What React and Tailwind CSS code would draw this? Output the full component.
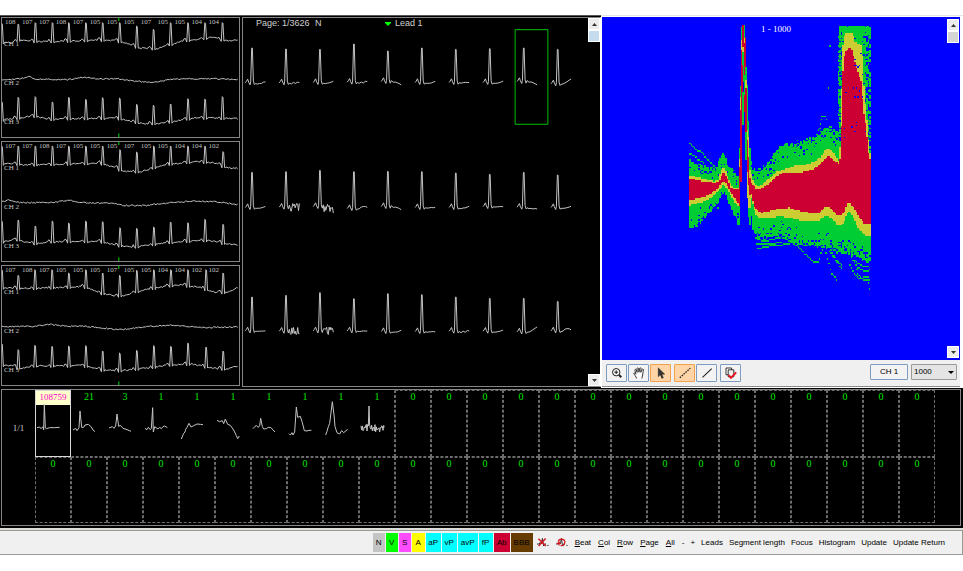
import React from "react";

/* Small seeded generator, so that every render gives the same traces. */
function makeRandom(seed) {
  let s = seed;
  return () => {
    s = (s * 1664525 + 1013904223) % 4294967296;
    return s / 4294967296;
  };
}

/* Linear interpolation in a list of [x, y] points. */
function at(points, x) {
  if (x <= points[0][0]) return points[0][1];
  for (let i = 1; i < points.length; i++) {
    if (x <= points[i][0]) {
      const [x0, y0] = points[i - 1];
      const [x1, y1] = points[i];
      return y0 + ((y1 - y0) * (x - x0)) / (x1 - x0);
    }
  }
  return points[points.length - 1][1];
}

/* ---------- Holter strips ---------- */

const STRIPS = [
  {
    top: 54,
    rates: [108, 107, 107, 108, 107, 105, 105, 105, 107, 105, 105, 104, 104],
    peaks: [6, 55, 106, 157, 206, 257, 307, 358, 409, 459, 510, 562, 613, 665],
    ch1: [[6, 128], [40, 128], [55, 120], [120, 125], [240, 122], [300, 120], [350, 122], [400, 137], [420, 144], [470, 146], [510, 133], [550, 122], [590, 118], [630, 112], [680, 122], [712, 120]],
    t1: [70, 72, 68, 68, 68, 68, 68, 68, 78, 88, 68, 68, 68, 68],
    ch2: [[6, 241], [50, 237], [90, 230], [105, 238], [200, 239], [250, 232], [300, 237], [360, 237], [400, 243], [460, 248], [510, 238], [600, 236], [712, 238]],
    ch3: [[6, 360], [50, 355], [100, 347], [150, 358], [200, 356], [300, 355], [350, 354], [400, 365], [430, 371], [480, 370], [520, 364], [580, 353], [712, 356]],
    t3: [305, 292, 290, 306, 292, 298, 293, 294, 313, 316, 312, 296, 297, 290],
  },
  {
    top: 13,
    rates: [107, 107, 108, 107, 105, 105, 105, 107, 105, 105, 104, 104, 102],
    peaks: [6, 55, 106, 157, 206, 257, 307, 359, 409, 460, 510, 562, 613, 667],
    ch1: [[6, 79], [50, 78], [70, 82], [200, 79], [300, 76], [350, 92], [370, 101], [420, 102], [460, 90], [510, 79], [590, 71], [640, 76], [680, 90], [712, 92]],
    t1: [25, 25, 25, 25, 25, 25, 25, 36, 43, 25, 25, 25, 25, 42],
    ch2: [[6, 192], [30, 187], [60, 195], [160, 194], [200, 188], [250, 195], [350, 198], [370, 203], [430, 204], [520, 194], [600, 190], [650, 193], [712, 201]],
    ch3: [[6, 313], [50, 304], [70, 312], [110, 318], [150, 312], [300, 311], [350, 323], [400, 328], [440, 323], [500, 315], [560, 311], [620, 308], [690, 320], [712, 322]],
    t3: [250, 247, 265, 250, 256, 250, 252, 270, 272, 268, 253, 255, 245, 260],
  },
  {
    top: 17,
    rates: [107, 108, 107, 105, 105, 105, 107, 105, 105, 104, 104, 102, 102],
    peaks: [6, 55, 105, 156, 206, 257, 307, 358, 409, 460, 511, 562, 616, 667],
    ch1: [[6, 83], [100, 84], [200, 81], [250, 78], [300, 98], [340, 106], [370, 106], [400, 95], [440, 87], [500, 77], [540, 74], [600, 81], [640, 95], [680, 97], [712, 80]],
    t1: [28, 45, 28, 28, 38, 28, 38, 45, 30, 28, 28, 28, 28, 38],
    ch2: [[6, 199], [100, 198], [150, 192], [200, 198], [250, 198], [360, 208], [450, 198], [520, 194], [600, 202], [712, 200]],
    ch3: [[6, 315], [40, 316], [60, 325], [100, 316], [200, 317], [250, 315], [300, 329], [360, 331], [450, 322], [500, 314], [570, 311], [650, 325], [680, 326], [712, 316]],
    t3: [250, 268, 255, 258, 257, 256, 272, 278, 270, 256, 258, 248, 260, 272],
  },
];

function rhythm(base, peaks, tops, seed) {
  const rnd = makeRandom(seed);
  const pts = [];
  for (let x = 6; x <= 712; x += 4) {
    const y = at(base, x);
    const near = peaks.findIndex((p) => Math.abs(p - x) <= 5);
    if (tops && near >= 0) continue;
    const pWave = tops && peaks.some((p) => p - x > 7 && p - x < 14) ? -5 : 0;
    pts.push([x, y + pWave + (rnd() - 0.5) * 4]);
  }
  if (tops) {
    peaks.forEach((p, i) => {
      const y = at(base, p);
      pts.push([p - 4, y + 5], [p - 1, tops[i]], [p + 1, tops[i] + 2], [p + 4, y + 4]);
    });
  }
  pts.sort((a, b) => a[0] - b[0]);
  return pts.map(([x, y]) => `${x},${y.toFixed(1)}`).join(" ");
}

function Trace({ points, width = 1 }) {
  return (
    <polyline
      points={points}
      fill="none"
      stroke="#c4c4c4"
      strokeWidth={width}
      vectorEffect="non-scaling-stroke"
    />
  );
}

function Strip({ strip, index }) {
  return (
    <section className="relative h-[121px] border border-[#858585]">
      <svg
        className="block h-full w-full"
        viewBox={`6 ${strip.top} 708 357`}
        preserveAspectRatio="none"
        aria-hidden="true"
      >
        <Trace points={rhythm(strip.ch1, strip.peaks, strip.t1, 11 + index)} />
        <Trace points={rhythm(strip.ch2, strip.peaks, null, 21 + index)} />
        <Trace points={rhythm(strip.ch3, strip.peaks, strip.t3, 31 + index)} />
        <path
          d={`M355 ${strip.top}v9M355 ${strip.top + 346}v11`}
          stroke="#00e000"
          strokeWidth="1"
          vectorEffect="non-scaling-stroke"
        />
      </svg>
      <div className="absolute top-0 right-5 left-[3px] flex justify-between text-[7px] leading-[9px] text-[#c0c0c0]">
        {strip.rates.map((r, i) => (
          <span key={i}>{r}</span>
        ))}
      </div>
      <div className="absolute top-[22px] left-[2px] flex flex-col gap-[30px] text-[7px] leading-[9px] text-[#c8c8c8]">
        <span>CH 1</span>
        <span>CH 2</span>
        <span>CH 3</span>
      </div>
    </section>
  );
}

/* ---------- Beat gallery ---------- */

/* [top, base, kind of tail] for the ten beats of every row */
const BEATS = [
  [[57, 160, "rise"], [60, 160, "rough"], [61, 159, "rise"], [45, 158, "rough"], [66, 156, "fall"], [57, 159, "rise"], [61, 159, "flat"], [59, 159, "rise"], [57, 156, "fall"], [61, 163, "climb"]],
  [[429, 533, "rise"], [427, 532, "noise"], [423, 530, "noiseLow"], [427, 536, "arch"], [426, 530, "fall"], [427, 533, "flat"], [431, 533, "rise"], [435, 530, "flat"], [429, 532, "flatLow"], [437, 533, "rise"]],
  [[802, 902, "flat"], [797, 903, "noise"], [789, 902, "noise"], [807, 902, "flat"], [792, 904, "rise"], [795, 904, "flat"], [802, 903, "rough"], [806, 903, "rise"], [806, 905, "climb"], [815, 902, "arch"]],
];

const TAILS = {
  rise: [4, 4, 3, 2, -1, -3],
  flat: [2, 3, 2, 1, 2, 1],
  flatLow: [3, 5, 4, 6, 5, 7],
  rough: [2, 5, 0, 4, -2, 1],
  fall: [-2, 3, 3, 5, 8, 12],
  climb: [3, 1, -2, -6, -10, -15],
  arch: [4, 2, -4, -6, -5, -2],
  noise: [2, 2, 2, 2, 2, 2],
  noiseLow: [2, 5, 6, 9, 9, 10],
};

function beat(x, [top, base, kind], seed) {
  const rnd = makeRandom(seed);
  const noisy = kind.startsWith("noise");
  const pts = [
    [x - 20, base + 1],
    [x - 17, base - 3],
    [x - 13, base - 10],
    [x - 10, base - 1],
    [x - 6, base + 7],
    [x - 4, base - 2],
    [x - 1, top],
    [x + 1, top],
    [x + 4, base - 4],
    [x + 7, base + 6],
  ];
  const tail = TAILS[kind];
  const step = noisy ? 2.5 : 6;
  for (let d = 10; d <= 42; d += step) {
    const y = at(tail.map((v, i) => [9 + i * 6.6, v]), d);
    pts.push([x + d, base + y + (rnd() - 0.5) * (noisy ? 26 : 1.5)]);
  }
  return pts.map(([px, py]) => `${px},${py.toFixed(1)}`).join(" ");
}

function Gallery() {
  return (
    <svg
      className="block min-h-0 w-full flex-1"
      viewBox="3 0 1032 1068"
      preserveAspectRatio="none"
      aria-hidden="true"
    >
      {BEATS.map((row, r) =>
        row.map((b, i) => (
          <Trace key={`${r}-${i}`} points={beat(30 + i * 101.6, b, 7 + r * 13 + i * 5)} />
        ))
      )}
      <rect
        x="817"
        y="2"
        width="98"
        height="283"
        fill="none"
        stroke="#00c000"
        strokeWidth="1"
        vectorEffect="non-scaling-stroke"
      />
    </svg>
  );
}

/* ---------- Density plot ---------- */

const GREEN = "#00cc33";
const YELLOW = "#cccc33";
const RED = "#cc0033";
const BLUE = "#0000ff";

const LEFT = {
  gT: [[27, 436], [50, 448], [75, 455], [105, 460], [115, 432], [128, 405], [135, 430], [145, 458], [160, 470], [176, 480]],
  yT: [[27, 480], [60, 488], [100, 498], [112, 495], [120, 465], [128, 456], [137, 470], [145, 500], [155, 515], [176, 520]],
  rT: [[27, 489], [60, 497], [100, 503], [115, 500], [122, 478], [128, 468], [138, 485], [148, 515], [160, 522], [176, 525]],
  rB: [[27, 555], [60, 548], [90, 535], [110, 520], [122, 502], [128, 497], [135, 503], [145, 525], [160, 548], [176, 570]],
  yB: [[27, 570], [60, 562], [90, 548], [115, 525], [128, 508], [138, 520], [150, 545], [165, 565], [176, 577]],
  gB: [[27, 640], [50, 632], [70, 612], [100, 575], [120, 548], [132, 532], [145, 565], [160, 600], [172, 628], [176, 630]],
};

const RIGHT = {
  gT: [[210, 430], [216, 462], [240, 462], [265, 440], [285, 410], [300, 388], [330, 386], [360, 380], [390, 370], [410, 360], [425, 345], [445, 335], [460, 342], [470, 352], [476, 345], [477, 30], [570, 30]],
  yT: [[210, 470], [214, 490], [222, 508], [235, 514], [250, 500], [270, 485], [290, 468], [310, 462], [340, 452], [370, 450], [400, 440], [420, 425], [435, 402], [445, 398], [455, 408], [465, 425], [474, 438], [478, 380], [482, 200], [486, 90], [492, 52], [515, 52], [522, 80], [543, 92], [550, 230], [556, 290], [562, 370], [570, 440]],
  rT: [[210, 500], [225, 520], [240, 520], [260, 508], [285, 484], [300, 475], [330, 472], [370, 470], [400, 460], [425, 440], [440, 425], [448, 425], [460, 437], [475, 445], [480, 410], [484, 210], [488, 125], [498, 102], [512, 98], [518, 125], [530, 170], [540, 200], [548, 290], [556, 340], [562, 410], [570, 445]],
  rB: [[210, 530], [220, 575], [240, 593], [265, 588], [300, 580], [325, 578], [350, 585], [380, 592], [415, 592], [430, 577], [440, 573], [455, 585], [470, 600], [480, 600], [490, 590], [500, 560], [508, 562], [520, 580], [535, 605], [550, 625], [570, 628]],
  yB: [[210, 545], [225, 600], [240, 610], [300, 604], [330, 608], [370, 618], [410, 618], [435, 602], [450, 608], [470, 630], [485, 630], [495, 605], [503, 588], [515, 600], [530, 640], [550, 660], [570, 660]],
  gB: [[210, 590], [215, 640], [230, 668], [260, 672], [300, 658], [330, 675], [370, 690], [410, 695], [440, 700], [470, 712], [500, 718], [520, 720], [550, 740], [570, 745]],
};

/* The two flanks of the R wave: [x, y, width, height, colour] */
const SPIKE = [
  [176, 400, 5, 230, GREEN], [176, 432, 5, 25, YELLOW], [176, 457, 5, 115, RED],
  [180, 212, 5, 45, GREEN], [180, 245, 5, 45, YELLOW], [180, 285, 5, 215, RED],
  [183, 35, 5, 40, GREEN], [183, 75, 5, 35, YELLOW], [183, 105, 5, 185, RED],
  [187, 30, 5, 70, RED], [187, 95, 5, 20, YELLOW], [187, 110, 5, 90, GREEN], [187, 150, 3, 60, RED], [187, 230, 4, 100, GREEN],
  [191, 30, 5, 42, GREEN], [191, 70, 5, 25, YELLOW], [191, 85, 5, 205, RED], [191, 180, 3, 60, GREEN],
  [195, 65, 3, 150, RED], [196, 155, 5, 50, GREEN], [196, 195, 5, 25, YELLOW], [196, 220, 5, 130, RED], [196, 350, 4, 85, GREEN],
  [200, 210, 5, 85, GREEN], [200, 290, 5, 100, GREEN], [200, 345, 5, 45, YELLOW], [200, 375, 5, 95, RED], [200, 470, 4, 80, YELLOW],
  [204, 318, 4, 120, GREEN], [204, 365, 4, 65, YELLOW], [204, 425, 5, 85, RED], [204, 510, 4, 70, YELLOW], [204, 580, 4, 25, GREEN],
  [208, 400, 4, 90, GREEN], [208, 465, 4, 30, YELLOW], [208, 490, 5, 50, RED], [208, 540, 4, 40, YELLOW], [208, 580, 4, 50, GREEN],
];

/* Single stray beats, drawn as rows of dots */
const STRAYS = [
  [[27, 383], [45, 402], [60, 405], [75, 425], [90, 440], [105, 455]],
  [[27, 415], [40, 418], [50, 432], [70, 440]],
  [[225, 668], [250, 676], [300, 663], [335, 678], [380, 690]],
  [[232, 697], [270, 690], [300, 688], [335, 680], [350, 690], [370, 712], [400, 740], [414, 740], [422, 708], [432, 692]],
  [[228, 682], [265, 684], [300, 680]],
  [[436, 712], [444, 740], [452, 772], [470, 793]],
  [[446, 705], [462, 730], [482, 755]],
  [[455, 712], [470, 735], [484, 748]],
  [[508, 745], [520, 770], [535, 788], [570, 780]],
  [[512, 725], [530, 755], [550, 765], [570, 762]],
  [[522, 735], [545, 750], [570, 752]],
  [[530, 775], [550, 792], [570, 790]],
  [[404, 365], [412, 345], [420, 335]],
  [[424, 300], [434, 302], [440, 315]],
];

const STRAY_DOTS = [[449, 91], [445, 218], [568, 821], [565, 800], [114, 575], [530, 760], [352, 372], [424, 312], [421, 325]];

const CELL = 4.5;

function densityPaths() {
  const rnd = makeRandom(99);
  const d = { green: "", yellow: "", red: "", holes: "" };
  const snap = (y) => Math.round(y / CELL) * CELL;
  const run = (x, y0, y1) => {
    const a = snap(y0);
    const b = snap(y1);
    return b > a ? `M${x} ${a}h${CELL}v${b - a}h-${CELL}z` : "";
  };
  const dot = (x, y) => `M${x} ${snap(y)}h${CELL}v${CELL}h-${CELL}z`;
  for (let x = 27; x < 568; x += CELL) {
    if (x > 174 && x < 210) continue;
    const side = x < 180 ? LEFT : RIGHT;
    const gT = at(side.gT, x);
    const yT = at(side.yT, x);
    const gB = at(side.gB, x);
    const yB = at(side.yB, x);
    const tower = x > 476;
    const topJitter = tower ? rnd() * 5 : (rnd() - 0.5) * 10;
    d.green += run(x, gT + topJitter, gB + (rnd() - 0.5) * 8);
    d.yellow += run(x, yT, yB);
    d.red += run(x, at(side.rT, x), at(side.rB, x));
    for (let y = gT; y < yT - 8; y += CELL) {
      const towerEdge = y < 50 ? 0.05 : x > 556 ? 0.4 : x > 540 ? 0.1 : x < 482 ? 0.3 : 0.02;
      const edge = tower ? towerEdge : 0.2 * Math.max(0, 1 - (y - gT) / 50);
      if (rnd() < edge) d.holes += dot(x, y);
    }
    for (let y = yB + 14; y < gB; y += CELL) {
      const edge = x > 420 ? 0.34 : 0.16;
      if (rnd() < edge * Math.max(0, 1 - (gB - y) / 55)) d.holes += dot(x, y);
    }
    if (tower && x > 488) {
      for (let y = 110; y < 400; y += CELL) {
        if (rnd() < (x > 520 ? 0.04 : 0.01)) d.holes += dot(x, y);
      }
    }
  }
  /* frayed left rim of the artefact */
  for (let y = 40; y < 330; y += CELL) {
    if (rnd() < 0.4) d.green += dot(473, y);
  }
  let strays = "";
  STRAYS.forEach((line) => {
    for (let x = line[0][0]; x <= Math.min(566, line[line.length - 1][0]); x += CELL) {
      strays += dot(x, at(line, x));
    }
  });
  STRAY_DOTS.forEach(([x, y]) => {
    strays += dot(x - 2, y);
  });
  return { ...d, strays };
}

const DENSITY = densityPaths();

function Density() {
  return (
    <svg
      className="block h-full w-full"
      viewBox="-234 6 1035 1029"
      preserveAspectRatio="none"
      shapeRendering="crispEdges"
      aria-hidden="true"
    >
      <path d={DENSITY.green} fill={GREEN} />
      <path d={DENSITY.yellow} fill={YELLOW} />
      <path d={DENSITY.red} fill={RED} />
      <path d={DENSITY.holes} fill={BLUE} />
      <path d={DENSITY.strays} fill={GREEN} />
      {SPIKE.map(([x, y, w, h, fill], i) => (
        <rect key={i} x={x} y={y} width={w} height={h} fill={fill} />
      ))}
    </svg>
  );
}

/* ---------- Scroll bars ---------- */

function ScrollBar({ thumb }) {
  return (
    <div className="flex w-3 shrink-0 flex-col">
      <button
        aria-label="Scroll up"
        className="flex h-3 w-3 items-center justify-center border border-white bg-[#ececec]"
      >
        <svg className="h-[3px] w-[5px]" viewBox="0 0 5 3" aria-hidden="true">
          <path d="M0 3L2.5 0L5 3z" fill="#333" />
        </svg>
      </button>
      <div className={thumb} />
      <div className="flex-1" />
      <button
        aria-label="Scroll down"
        className="flex h-3 w-3 items-center justify-center border border-white bg-[#ececec]"
      >
        <svg className="h-[3px] w-[5px]" viewBox="0 0 5 3" aria-hidden="true">
          <path d="M0 0L2.5 3L5 0z" fill="#333" />
        </svg>
      </button>
    </div>
  );
}

/* ---------- Tool buttons ---------- */

function Tool({ label, active, children }) {
  return (
    <button
      aria-label={label}
      className={
        active
          ? "flex h-[18px] w-[21px] items-center justify-center rounded-[1px] border border-[#f5a04a] bg-[#ffd5a8]"
          : "flex h-[18px] w-[21px] items-center justify-center rounded-[1px] border border-[#7c9cc0] bg-[#f3f3f3]"
      }
    >
      <svg className="h-3 w-3" viewBox="0 0 12 12" fill="none" stroke="#222" aria-hidden="true">
        {children}
      </svg>
    </button>
  );
}

function Toolbar() {
  return (
    <div className="flex h-[26px] items-start gap-px bg-[#f0f0f0] pt-1 pr-[3px] pl-1">
      <Tool label="Zoom">
        <circle cx="5.2" cy="5.2" r="3.7" strokeWidth="1" />
        <path d="M3.4 5.2h3.6M5.2 3.4v3.6" strokeWidth="1" />
        <path d="M8 8l2.3 2.3" strokeWidth="2" />
      </Tool>
      <Tool label="Pan">
        <path
          d="M3.6 11.4C3.2 9.6 1.6 8 .8 6.6C.6 5.8 1.8 5.6 2.5 6.9L3 7.2L1.9 3.2C1.8 2.2 2.9 2 3.3 3L4.2 5.4L4 1.6C4.1.6 5.3.6 5.5 1.6L6 5.2L6.6 1.4C6.9.5 8 .7 8 1.7L7.8 5.3L9.2 2.4C9.7 1.6 10.6 2 10.4 3C10 5 9.8 8.4 8.8 11.4"
          fill="#fff"
          strokeWidth=".9"
        />
      </Tool>
      <Tool label="Select" active>
        <path d="M3.2.8v9l2.1-2l1.5 3.6l1.6-.7l-1.5-3.4h2.9z" fill="#333" strokeWidth=".4" />
      </Tool>
      <span className="w-px" />
      <Tool label="Dotted line" active>
        <path d="M.8 10.8L11.3 1.2" strokeWidth="1.3" strokeDasharray="1.6 1" />
      </Tool>
      <Tool label="Line">
        <path d="M1.5 10.3L10.7 1.7" strokeWidth="1.1" />
      </Tool>
      <span className="w-px" />
      <Tool label="Confirm">
        <path d="M1 1h5.6v6.8H1z" fill="#fff" strokeWidth=".9" />
        <path d="M3.2 2.8h5.6v7H3.2z" fill="#eee" strokeWidth=".9" />
        <path d="M3.6 8.2L6 10.8L11.2 5.4" stroke="#e8101c" strokeWidth="1.9" />
      </Tool>
      <span className="flex-1" />
      <button className="h-4 w-[38px] rounded-[1px] border border-[#7c9cc0] bg-[#f3f3f3] text-[8px] leading-[14px] text-black">
        CH 1
      </button>
      <span className="w-px" />
      <div className="relative flex items-center">
        <select
          aria-label="Beats shown"
          defaultValue="1000"
          className="h-4 w-[46px] appearance-none rounded-[1px] border border-[#999] bg-[#e4e4e4] pl-[2px] text-[8px] leading-[14px] text-black"
        >
          <option>1000</option>
        </select>
        <svg className="pointer-events-none absolute right-[3px] h-[3px] w-[6px]" viewBox="0 0 6 3" aria-hidden="true">
          <path d="M0 0h6L3 3z" fill="#000" />
        </svg>
      </div>
    </div>
  );
}

/* ---------- Template table ---------- */

function noiseTemplate() {
  const rnd = makeRandom(5);
  const pts = [];
  for (let x = 6; x <= 76; x += 2) {
    pts.push(x > 27 && x < 32 ? `${x},${x < 30 ? 66 : 6}` : `${x},${(72 + (rnd() - 0.5) * 24).toFixed(1)}`);
  }
  return pts.join(" ");
}

const TEMPLATES = [
  { count: 108759, points: "6,71 14,69 18,74 24,68 26,78 28,0 31,72 34,74 44,71 58,71 74,70" },
  { count: 21, points: "6,78 14,73 18,80 24,71 27,21 32,70 38,70 42,63 52,61 60,68 66,78 72,83" },
  { count: 3, points: "6,72 16,68 21,73 26,66 30,30 35,67 40,64 48,73 63,78 72,82" },
  { count: 1, points: "6,73 12,77 16,70 22,77 25,73 29,11 31,84 35,68 45,75 50,70 55,74 60,68 65,66 73,71" },
  { count: 1, points: "7,105 14,88 18,84 20,76 24,70 30,58 36,69 44,65 54,60 64,61 72,62" },
  { count: 1, points: "6,49 14,53 22,50 26,59 31,45 38,61 46,64 56,78 64,95 68,104 73,96" },
  { count: 1, points: "6,74 12,67 16,65 22,70 26,65 29,43 34,68 38,75 46,74 52,70 60,71 66,78 72,84" },
  { count: 1, points: "6,89 10,93 15,86 18,93 23,84 28,9 32,40 40,37 46,56 52,80 60,81 66,79 73,79" },
  { count: 1, points: "8,93 12,82 16,68 20,58 28,-7 33,33 36,68 42,86 50,90 56,80 62,86 74,76" },
  { count: 1, points: noiseTemplate() },
];

function templateStyle(row, i) {
  if (row === 0 && i === 0) return "h-[67px] border border-solid border-[#d8d8d8]";
  if (row === 0 && i < 9) return "h-[67px] border border-dashed border-transparent border-b-[#6c6c6c]";
  if (row === 0 && i === 9) return "h-[67px] border border-dashed border-transparent border-r-[#6c6c6c] border-b-[#6c6c6c]";
  if (row === 0) return "h-[67px] border border-dashed border-[#6c6c6c]";
  return "h-[66px] border border-dashed border-[#6c6c6c]";
}

function TemplateTable() {
  return (
    <section className="bg-black pt-px pr-[2px] pb-[2px] pl-px font-[Liberation_Serif,serif]">
      <div className="flex border border-[#858585]">
        <div className="w-[33px] shrink-0 pt-8 text-center text-[9px] leading-[12px] text-[#c8c8c8]">
          1/1
        </div>
        <div className="mr-[25px] grid flex-1 grid-cols-[repeat(25,minmax(0,1fr))] pb-[2px]">
          {[0, 1].map((row) =>
            Array.from({ length: 25 }, (_, i) => {
              const t = row === 0 ? TEMPLATES[i] : null;
              const selected = row === 0 && i === 0;
              return (
                <div key={`${row}-${i}`} className={templateStyle(row, i)}>
                  <div
                    className={
                      selected
                        ? "h-[14px] bg-[#ffffcc] text-center text-[9px] leading-[12px] text-[#ff00c8]"
                        : "h-[14px] text-center text-[10px] leading-[12px] text-[#00e800]"
                    }
                  >
                    {t ? t.count : 0}
                  </div>
                  {t && (
                    <svg
                      className="block h-[51px] w-full overflow-visible"
                      viewBox="3 3 102 153"
                      preserveAspectRatio="none"
                      aria-hidden="true"
                    >
                      <Trace points={t.points} />
                    </svg>
                  )}
                </div>
              );
            })
          )}
        </div>
      </div>
    </section>
  );
}

/* ---------- Command bar ---------- */

const CLASSES = [
  ["N", "w-3 bg-[#c4c4c4]"],
  ["V", "w-3 bg-[#00ff00]"],
  ["S", "w-3 bg-[#ff4cff]"],
  ["A", "w-[13px] bg-[#ffff00]"],
  ["aP", "w-[15px] bg-[#00ffff]"],
  ["vP", "w-[15px] bg-[#00ffff]"],
  ["avP", "w-5 bg-[#00ffff]"],
  ["fP", "w-[14px] bg-[#00ffff]"],
  ["Ab", "w-4 bg-[#cc0033]"],
  ["BBB", "w-[22px] bg-[#663c00]"],
];

const SCOPES = [
  ["B", "eat"],
  ["C", "ol"],
  ["R", "ow"],
  ["P", "age"],
  ["A", "ll"],
];

const COMMANDS = ["-", "+", "Leads", "Segment length", "Focus", "Histogram", "Update", "Update Return"];

function CommandBar() {
  return (
    <nav className="flex h-[25px] items-center justify-end gap-[7px] border-t border-r border-b border-[#9a9a94] bg-[#f0f0f0] pr-[17px] text-[8px] text-black">
      <div className="flex items-center gap-[7px]">
        <div className="-mr-[3px] flex gap-px">
          {CLASSES.map(([name, look]) => (
            <button key={name} className={`h-[19px] text-center ${look}`}>
              {name}
            </button>
          ))}
        </div>
        <button aria-label="Delete beat">
          <svg className="block h-[9px] w-3" viewBox="0 0 12 9" fill="none" aria-hidden="true">
            <path d="M0 6h2.2l1-1.5L4.4 6l1-5.5L6.6 8l1-2H9" stroke="#222" strokeWidth=".9" />
            <path d="M1.4.8L9 8M8.6.6L1.6 8" stroke="#d4141e" strokeWidth="1.5" />
            <path d="M10.4 7.4h1.2" stroke="#222" />
          </svg>
        </button>
        <button aria-label="Rename beat">
          <svg className="block h-[9px] w-3" viewBox="0 0 12 9" fill="none" aria-hidden="true">
            <path d="M0 6h2.2l1-1.5L4.4 6l1-5.5L6.6 8l1-2H9" stroke="#222" strokeWidth=".9" />
            <path d="M2.2 3.6C3 .4 8 .2 8.8 3.4C9.4 6 7 8.2 4.6 7.4M.8 5.4h4M3 3.6v3.8" stroke="#d4141e" strokeWidth="1.3" />
            <path d="M10.4 7.4h1.2" stroke="#222" />
          </svg>
        </button>
        {SCOPES.map(([key, rest]) => (
          <button key={key} className="whitespace-nowrap">
            <span className="underline">{key}</span>
            {rest}
          </button>
        ))}
      </div>
      <div className="flex items-center gap-[6px]">
        {COMMANDS.map((name) => (
          <button key={name} className="whitespace-nowrap">
            {name}
          </button>
        ))}
      </div>
    </nav>
  );
}

export default function App() {
  return (
    <main className="min-h-screen bg-white pt-[15px] font-[Liberation_Sans,Arial,sans-serif]">
      <div className="grid grid-cols-[minmax(0,241fr)_minmax(0,360fr)_minmax(0,362fr)]">
        <div className="flex flex-col gap-[3px] border-t border-[#555] bg-black pt-px pr-px pb-px pl-px font-[Liberation_Serif,serif]">
          {STRIPS.map((s, i) => (
            <Strip key={i} strip={s} index={i} />
          ))}
        </div>

        <div className="flex border-t border-[#555] bg-black pt-px pb-px pl-px">
          <section className="flex flex-1 border border-[#858585] border-r-white">
            <div className="flex min-w-0 flex-1 flex-col">
              <header className="flex h-[11px] items-center pl-[13px] text-[9px] leading-[11px] text-[#d0d0d0]">
                <span className="w-[59px]">Page: 1/3626</span>
                <span className="w-[70px]">N</span>
                <svg className="mr-1 h-1 w-[6px]" viewBox="0 0 6 4" aria-hidden="true">
                  <path d="M0 0h6v1L3 4L0 1z" fill="#00ff00" />
                </svg>
                <span>Lead 1</span>
              </header>
              <Gallery />
            </div>
            <ScrollBar thumb="h-3 border border-white bg-[#c4dcee]" />
          </section>
        </div>

        <div className="flex flex-col border-t border-[#e4e4e4] bg-white pt-px pr-[3px] pl-px">
          <section className="relative flex h-[343px] bg-[#0000ff] pr-px">
            <div className="min-w-0 flex-1">
              <Density />
            </div>
            <div className="flex py-[2px]">
              <ScrollBar thumb="h-3 border border-white bg-[#d4d4d4]" />
            </div>
            <div className="absolute top-[6px] left-0 w-full pr-[10px] text-center font-[Liberation_Serif,serif] text-[9px] leading-[12px] text-white">
              1 - 1000
            </div>
          </section>
          <Toolbar />
          <div className="h-px bg-[#8c8c8c]" />
        </div>
      </div>

      <TemplateTable />
      <div className="h-[2px] bg-[#dcdcd8]" />
      <CommandBar />
    </main>
  );
}
